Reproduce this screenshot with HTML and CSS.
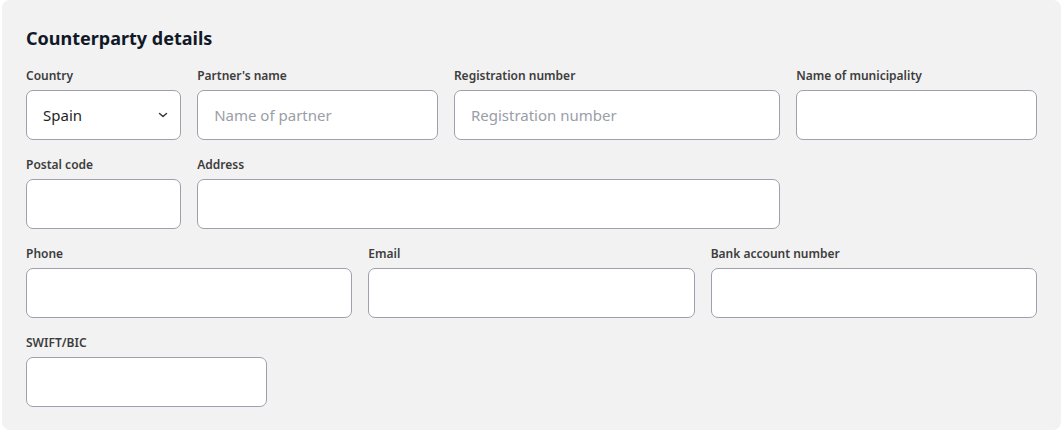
FILE: index.html
```html
<!DOCTYPE html>
<html lang="en">
<head>
<meta charset="utf-8">
<title>Counterparty details</title>
<link rel="stylesheet" href="styles.css">
</head>
<body>
<section class="panel">
  <h2 class="title">Counterparty details</h2>
  <div class="grid">
    <div class="field span-2">
      <label class="label">Country</label>
      <div class="control select">
        <span class="value">Spain</span>
        <svg class="chev" width="10" height="6" viewBox="0 0 10 6"><path d="M1.5 1.5 L5 4.5 L8.5 1.5" fill="none" stroke="#333" stroke-width="1.4" stroke-linecap="round" stroke-linejoin="round"/></svg>
      </div>
    </div>
    <div class="field span-3">
      <label class="label">Partner's name</label>
      <div class="control"><span class="placeholder">Name of partner</span></div>
    </div>
    <div class="field span-4">
      <label class="label">Registration number</label>
      <div class="control"><span class="placeholder">Registration number</span></div>
    </div>
    <div class="field span-3">
      <label class="label">Name of municipality</label>
      <div class="control"></div>
    </div>

    <div class="field span-2">
      <label class="label">Postal code</label>
      <div class="control"></div>
    </div>
    <div class="field span-7">
      <label class="label">Address</label>
      <div class="control"></div>
    </div>
    <div class="field span-3"></div>

    <div class="field span-4">
      <label class="label">Phone</label>
      <div class="control"></div>
    </div>
    <div class="field span-4">
      <label class="label">Email</label>
      <div class="control"></div>
    </div>
    <div class="field span-4">
      <label class="label">Bank account number</label>
      <div class="control"></div>
    </div>

    <div class="field span-3">
      <label class="label">SWIFT/BIC</label>
      <div class="control"></div>
    </div>
  </div>
</section>
</body>
</html>
```
FILE: styles.css
```css
* { box-sizing: border-box; }
html, body { margin: 0; padding: 0; background: #ffffff; }
body {
  font-family: "Noto Sans", "Open Sans", "Liberation Sans", sans-serif;
  color: #1f1f1f;
}
.panel {
  margin: 0 2px 0 2px;
  width: 1059px;
  height: 430px;
  background: #f2f2f2;
  border-radius: 8px;
  padding: 24px 24px 24px 24px;
}
.title {
  margin: 0 0 15px 0;
  font-size: 18px;
  line-height: 28px;
  font-weight: 700;
  color: #111827;
}
.grid {
  display: grid;
  grid-template-columns: repeat(12, 1fr);
  column-gap: 16px;
  row-gap: 16px;
  width: 1011px;
}
.span-2 { grid-column: span 2; }
.span-3 { grid-column: span 3; }
.span-4 { grid-column: span 4; }
.span-7 { grid-column: span 7; }
.field { display: flex; flex-direction: column; min-width: 0; }
.label {
  font-size: 12px;
  line-height: 17px;
  font-weight: 600;
  color: #3d3d3d;
  margin-bottom: 6px;
}
.control {
  height: 50px;
  background: #ffffff;
  border: 1px solid #9ea1ad;
  border-radius: 7px;
  display: flex;
  align-items: center;
  padding: 0 16px;
  font-size: 15px;
}
.placeholder { color: #9a9ea8; }
.select { justify-content: space-between; padding-right: 12px; }
.select .value { color: #1f1f1f; }
.chev { flex: none; }
```
